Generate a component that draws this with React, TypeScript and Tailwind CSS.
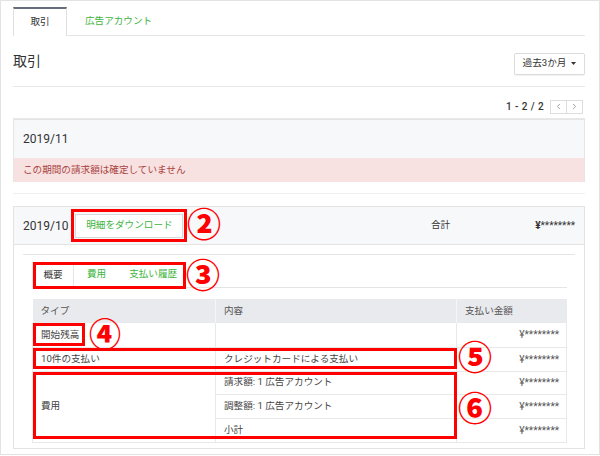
import { ChevronLeft, ChevronRight } from "lucide-react";

export default function App() {
  return (
    <div className="relative h-[455px] w-[600px] overflow-hidden border border-[#e3e3e3] bg-white pl-3 pr-[14px] pt-[6px] font-['Roboto','Noto_Sans_CJK_JP',sans-serif] text-[#333]">
      {/* Top tabs */}
      <div className="flex h-[29px] border-b border-[#e5e5e5] text-[9.6px]">
        <div className="flex h-[29px] w-[54px] items-center justify-center border-x border-t-2 border-x-[#e0e0e0] border-t-[#646e7e] bg-white">
          取引
        </div>
        <div className="flex items-center pl-[18px] text-[#3db43d]">広告アカウント</div>
      </div>

      {/* Heading */}
      <div className="flex h-[51px] items-center justify-between border-b border-[#e8e8e8]">
        <div className="text-[14px] leading-none">取引</div>
        <button className="mt-[5px] flex h-[22px] w-[71px] items-center justify-center gap-[5px] rounded-[2px] border border-[#dcdcdc] bg-white text-[9.6px] text-[#333] shadow-[0_1px_1px_rgba(0,0,0,0.06)]">
          過去3か月
          <svg width="5" height="3" viewBox="0 0 5 3">
            <path d="M0 0h5L2.5 3z" fill="#333" />
          </svg>
        </button>
      </div>

      {/* Pager */}
      <div className="flex h-[32px] items-center justify-end gap-[6px] border-b border-[#e8e8e8] pr-[2px] pt-[8px]">
        <span className="text-[10px] font-medium tracking-[0.4px]">1 - 2 / 2</span>
        <div className="flex h-[14px] border border-[#dddddd] bg-white">
          <span className="flex w-[16px] items-center justify-center border-r border-[#dddddd]">
            <ChevronLeft size={9} color="#9a9a9a" strokeWidth={2.5} />
          </span>
          <span className="flex w-[15px] items-center justify-center">
            <ChevronRight size={9} color="#9a9a9a" strokeWidth={2.5} />
          </span>
        </div>
      </div>

      {/* Card 2019/11 */}
      <div className="border-b border-[#f0f0f0] pb-[11px]">
        <div className="border border-b-0 border-[#e5e5e5]">
          <div className="flex h-[38px] items-center bg-[#f7f8fa] px-[9px] text-[12px]">2019/11</div>
          <div className="flex h-[24px] items-center bg-[#f8e1e1] px-[9px] text-[9.6px] text-[#a8433f]">
            この期間の請求額は確定していません
          </div>
        </div>
      </div>

      {/* Card 2019/10 */}
      <div className="mt-[12px] border border-[#e3e3e3]">
        <div className="flex h-[38px] items-center border-b border-[#e3e3e3] bg-[#f7f8fa] px-[9px]">
          <span className="text-[12px]">2019/10</span>
          <button className="ml-[7px] h-[24px] w-[108px] border border-[#d9d9d9] bg-white text-[9.6px] text-[#3db43d]">
            明細をダウンロード
          </button>
          <span className="ml-auto text-[9.6px]">合計</span>
          <span className="ml-[85px] text-[10px] text-[#333]">
            <b>¥</b>********
          </span>
        </div>
        <div className="px-[9px] pb-[5px] pt-[9px]">
          <div className="border-t border-[#e5e5e5] pl-[9px] pr-[8px] pt-[7px]">
            <div className="flex h-[26px] border-b border-[#e5e5e5] text-[9.6px]">
              <div className="flex h-[26px] w-[42px] items-center justify-center border-x border-t border-[#e5e5e5] bg-white">
                概要
              </div>
              <div className="flex items-center pl-[13px] text-[#3db43d]">費用</div>
              <div className="flex items-center pl-[23px] text-[#3db43d]">支払い履歴</div>
            </div>

            <table className="mt-[11px] w-full table-fixed border-collapse text-[9.6px] text-[#444]">
              <colgroup>
                <col className="w-[183px]" />
                <col className="w-[241px]" />
                <col />
              </colgroup>
              <thead>
                <tr className="h-[24px] bg-[#e9eaed] text-[#555]">
                  <th className="border-r border-[#f5f5f5] pl-[8px] text-left font-normal">タイプ</th>
                  <th className="border-r border-[#f5f5f5] pl-[8px] text-left font-normal">内容</th>
                  <th className="pl-[8px] text-left font-normal">支払い金額</th>
                </tr>
              </thead>
              <tbody>
                <tr className="h-[24px] border-b border-[#e8e8e8]">
                  <td className="border-x border-[#e8e8e8] pl-[8px]">開始残高</td>
                  <td className="border-r border-[#e8e8e8] pl-[8px]"></td>
                  <td className="border-r border-[#e8e8e8] pr-[7px] text-right text-[10px] text-[#555]">¥********</td>
                </tr>
                <tr className="h-[24px] border-b border-[#e8e8e8]">
                  <td className="border-x border-[#e8e8e8] pl-[8px]">10件の支払い</td>
                  <td className="border-r border-[#e8e8e8] pl-[8px]">クレジットカードによる支払い</td>
                  <td className="border-r border-[#e8e8e8] pr-[7px] text-right text-[10px] text-[#555]">¥********</td>
                </tr>
                <tr className="h-[23px] border-b border-[#e8e8e8]">
                  <td rowSpan={3} className="border-x border-[#e8e8e8] pl-[8px]">
                    費用
                  </td>
                  <td className="border-r border-[#e8e8e8] pl-[8px]">請求額: 1 広告アカウント</td>
                  <td className="border-r border-[#e8e8e8] pr-[7px] text-right text-[10px] text-[#555]">¥********</td>
                </tr>
                <tr className="h-[24px] border-b border-[#e8e8e8]">
                  <td className="border-r border-[#e8e8e8] pl-[8px]">調整額: 1 広告アカウント</td>
                  <td className="border-r border-[#e8e8e8] pr-[7px] text-right text-[10px] text-[#555]">¥********</td>
                </tr>
                <tr className="h-[24px] border-b border-[#e8e8e8]">
                  <td className="border-r border-[#e8e8e8] pl-[8px]">小計</td>
                  <td className="border-r border-[#e8e8e8] pr-[7px] text-right text-[10px] text-[#555]">¥********</td>
                </tr>
              </tbody>
            </table>
          </div>
        </div>
      </div>

      {/* Annotations */}
      <div className="absolute left-[70px] top-[208px] h-[33px] w-[116px] border-[3px] border-[#ff0000]" />
      <span className="absolute left-[186px] top-[207px] text-[34px] font-black leading-none text-[#ff0000]">②</span>

      <div className="absolute left-[32px] top-[261px] h-[27px] w-[153px] border-[3px] border-[#ff0000]" />
      <span className="absolute left-[185px] top-[258px] text-[34px] font-black leading-none text-[#ff0000]">③</span>

      <div className="absolute left-[32px] top-[322px] h-[23px] w-[52px] border-[3px] border-[#ff0000]" />
      <span className="absolute left-[88px] top-[318px] text-[32px] font-black leading-none text-[#ff0000]">④</span>

      <div className="absolute left-[32px] top-[347px] h-[21px] w-[424px] border-[3px] border-[#ff0000]" />
      <span className="absolute left-[457px] top-[340px] text-[34px] font-black leading-none text-[#ff0000]">⑤</span>

      <div className="absolute left-[32px] top-[371px] h-[67px] w-[424px] border-[3px] border-[#ff0000]" />
      <span className="absolute left-[457px] top-[391px] text-[34px] font-black leading-none text-[#ff0000]">⑥</span>
    </div>
  );
}
